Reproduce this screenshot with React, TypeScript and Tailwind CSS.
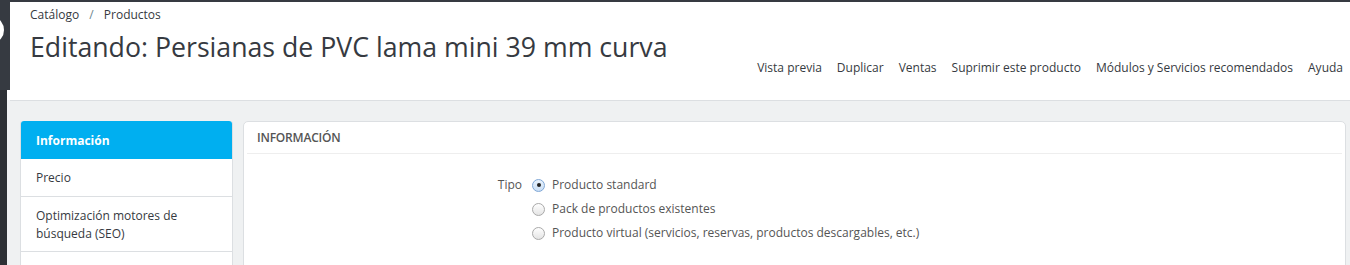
import React from 'react';

const Radio = ({ checked }: { checked?: boolean }) => (
  <span
    className={`w-[13px] h-[13px] rounded-full border flex items-center justify-center shrink-0 ${
      checked
        ? 'border-[#7fa7d6] bg-gradient-to-b from-[#e8f2fc] to-[#c9def5]'
        : 'border-[#a9a9a9] bg-gradient-to-b from-[#ffffff] to-[#e4e4e4]'
    }`}
  >
    {checked && <span className="w-[4px] h-[4px] rounded-full bg-[#222]" />}
  </span>
);

const App = () => {
  const actions = ['Vista previa', 'Duplicar', 'Ventas', 'Suprimir este producto', 'Módulos y Servicios recomendados', 'Ayuda'];
  const tipos = [
    'Producto standard',
    'Pack de productos existentes',
    'Producto virtual (servicios, reservas, productos descargables, etc.)',
  ];

  return (
    <div className="flex w-[1350px] h-[265px] overflow-hidden bg-[#eff1f2] text-[#363a41]" style={{ fontFamily: '"Open Sans", "Noto Sans", sans-serif' }}>
      {/* sidebar edge */}
      <div className="w-[10px] flex flex-col shrink-0">
        <div className="h-[90px] shrink-0 bg-[#363a41]">
          <svg width="10" height="90" viewBox="0 0 10 90">
            <path d="M-6 20 A 8 10 0 0 1 -6 40" fill="none" stroke="#fff" strokeWidth="4" />
          </svg>
        </div>
        <div className="flex-1 flex">
          <div className="w-[7px] bg-[#2d3035]" />
          <div className="flex-1 flex flex-col">
            <div className="h-[10px] bg-white" />
            <div className="flex-1 bg-[#eff1f2]" />
          </div>
        </div>
      </div>

      <div className="flex-1 flex flex-col">
        {/* header */}
        <div className="h-[101px] shrink-0 bg-white border-t-2 border-[#363a41] border-b border-b-[#dcdfe2] px-5 flex flex-col">
          <div className="text-[12px] leading-none mt-[7px]">
            Catálogo <span className="mx-[7px] text-[#6c868e]">/</span> Productos
          </div>
          <h1 className="text-[26.7px] leading-none mt-[13px]">Editando: Persianas de PVC lama mini 39 mm curva</h1>
          <div className="flex justify-end gap-[15px] text-[12px] leading-none mt-[1px] -mr-[13px]">
            {actions.map((a) => (
              <span key={a}>{a}</span>
            ))}
          </div>
        </div>

        {/* content */}
        <div className="flex gap-[10px] pl-[10px] pr-[4px] pt-[20px]">
          <div className="w-[213px] shrink-0 bg-white border border-[#dcdfe2] border-t-0 rounded-t-[3px] text-[12px]">
            <div className="h-[38px] bg-[#00aff0] text-white font-bold flex items-center px-[15px] pt-[1px] rounded-t-[3px]">Información</div>
            <div className="h-[38px] flex items-center px-[15px] pt-[1px] border-b border-[#dcdfe2]">Precio</div>
            <div className="h-[55px] flex items-center px-[15px] pt-[2px] border-b border-[#dcdfe2] leading-[18px]">
              Optimización motores de búsqueda (SEO)
            </div>
            <div className="h-[40px]" />
          </div>

          <div className="flex-1 bg-white border border-[#dcdfe2] rounded-[5px] px-[3px] h-[200px]">
            <div className="h-[32px] flex items-center px-[10px] border-b border-[#eeeeee] text-[12px] font-semibold uppercase tracking-[-0.2px] text-[#555]">
              Información
            </div>
            <div className="flex mt-[25px] text-[12px] text-[#555]">
              <div className="w-[285px] text-right pr-[10px] leading-[24px] -mt-[6px]">Tipo</div>
              <div className="flex flex-col -mt-[6px]">
                {tipos.map((t, i) => (
                  <label key={t} className="flex items-center gap-[7px] h-[24px] leading-none">
                    <Radio checked={i === 0} />
                    <span>{t}</span>
                  </label>
                ))}
              </div>
            </div>
          </div>
        </div>
      </div>
    </div>
  );
};

export default App;
